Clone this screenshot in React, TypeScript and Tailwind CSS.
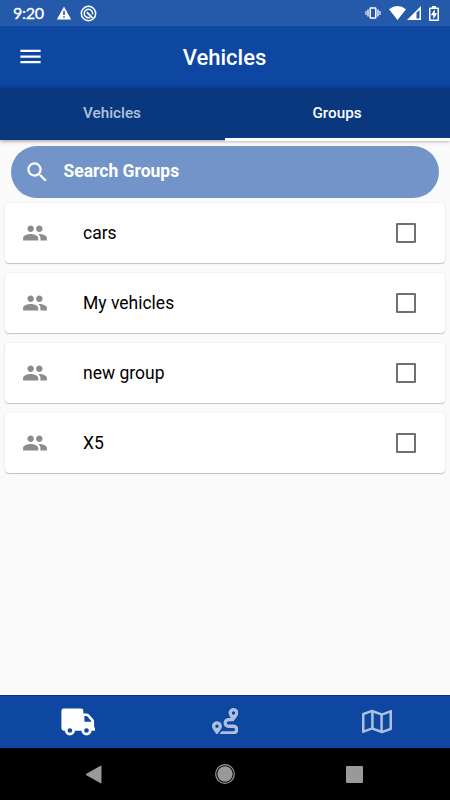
import React from "react";
import { FaRoute, FaRegMap } from "react-icons/fa";
import { MdPeople, MdSearch, MdMenu } from "react-icons/md";

const groups = ["cars", "My vehicles", "new group", "X5"];

function StatusBar() {
  return (
    <div className="flex h-[26px] shrink-0 items-center bg-[#255aab] pl-[13px] pr-[12px] text-white">
      <span className="w-[43px] font-['Lato',sans-serif] text-[16px] leading-[26px] tracking-[-0.3px] [-webkit-text-stroke:0.35px_white]">9:20</span>
      <svg width="16" height="14" viewBox="0 0 16 14">
        <path d="M8 .5 15.2 13.5H.8Z" fill="white" />
        <path d="M7.2 5h1.6v4H7.2zM7.2 10.2h1.6v1.6H7.2z" fill="#1c54aa" />
      </svg>
      <svg className="ml-2" width="17" height="17" viewBox="0 0 17 17" fill="none" stroke="white">
        <circle cx="8.5" cy="8.5" r="7.2" strokeWidth="1.5" />
        <path d="M10.2 12.3A4.2 4.2 0 1 1 12.5 9.4" strokeWidth="1.5" />
        <path d="M6.8 7.2 12.6 12.8" strokeWidth="1.8" />
      </svg>
      <div className="ml-auto flex items-center">
        <svg width="16" height="12" viewBox="0 0 16 12" fill="none" stroke="white">
          <rect x="5.2" y="1" width="5.6" height="10" rx=".6" strokeWidth="1.5" />
          <path d="M3 2.5v7M13 2.5v7" strokeWidth="1.3" />
          <path d="M1 4v4M15 4v4" strokeWidth="1.1" />
        </svg>
        <svg className="ml-[8px]" width="17" height="14" viewBox="0 0 17 14">
          <path d="M0 3.2Q8.5-3.2 17 3.2L8.5 14Z" fill="white" />
        </svg>
        <svg className="ml-[1px]" width="14" height="14" viewBox="0 0 14 14">
          <path d="M14 0v14H0Z" fill="white" />
          <path d="M9.5 6.5 12.5 4v8.5h-3Z" fill="#255aab" />
        </svg>
        <svg className="ml-[8px] mr-[-1px]" width="10" height="15" viewBox="0 0 10 15">
          <path d="M3 0h4v1.5h2q1 0 1 1V14q0 1-1 1H1q-1 0-1-1V2.5q0-1 1-1h2Z" fill="white" />
          <rect x="1.5" y="3" width="7" height="10.5" fill="#255aab" />
          <path d="M5.8 3.2v4h2.4L4.3 13.3V9.2H1.8Z" fill="white" />
        </svg>
      </div>
    </div>
  );
}

function TruckIcon() {
  return (
    <svg className="ml-[5px] mt-px" width="34" height="28" viewBox="0 0 34 28">
      <path
        d="M2.8.6H20q2.4 0 2.4 2.4v2.4h3.4q1.2 0 2 .9l4.5 5q.8.9.8 2.1v6h.4q.8 0 .8.8v1.7q0 .8-.8.8H2.8Q.4 22.7.4 20.3V3Q.4.6 2.8.6Z"
        fill="white"
      />
      <path d="M23.4 8.1h2q.6 0 1 .5l4 4.7q.3.5-.3.5h-6.7Z" fill="#0d47a1" />
      <circle cx="8.9" cy="22.5" r="3.7" fill="#0d47a1" stroke="white" strokeWidth="2.7" />
      <circle cx="25.5" cy="22.5" r="3.7" fill="#0d47a1" stroke="white" strokeWidth="2.7" />
    </svg>
  );
}

function GroupCard({ name }: { name: string }) {
  return (
    <div className="flex h-[60px] items-center rounded-[4px] bg-white pl-[17px] pr-[29px] shadow-[0_1px_1px_rgba(0,0,0,0.2),0_0_2px_rgba(0,0,0,0.1)]">
      <MdPeople size={26} className="text-[#8c8c8c]" />
      <span className="ml-[35px] flex-1 text-[17.5px] leading-6 text-black">{name}</span>
      <span className="h-5 w-5 rounded-[1px] border-2 border-[#707070]" />
    </div>
  );
}

export default function App() {
  return (
    <div className="flex h-[800px] w-[450px] flex-col overflow-hidden bg-[#fafafa] font-['Roboto',sans-serif]">
      <StatusBar />
      <header className="grid h-[61px] shrink-0 grid-cols-[1fr_auto_1fr] items-center bg-[#0d47a1] pl-[17px] pr-[18px] text-white">
        <MdMenu size={27} />
        <h1 className="pt-[2px] text-[22px] font-medium leading-7">Vehicles</h1>
      </header>
      <nav className="z-10 grid h-[53px] shrink-0 grid-cols-2 border-t border-[#0b3f91] bg-[#0a387f] text-center text-[15.25px] font-medium leading-[50px] shadow-[0_1px_4px_rgba(0,0,0,0.4)]">
        <span className="pr-px text-[#b3c2da]">Vehicles</span>
        <span className="border-b-[3px] border-white pr-px text-white">Groups</span>
      </nav>
      <main className="flex flex-1 flex-col">
        <div className="mx-[11px] mt-[5.5px] flex h-[52.5px] items-center rounded-full bg-[#7294c8] pl-[13px] text-white">
          <MdSearch size={26.5} />
          <span className="ml-[13px] pb-[2px] text-[17.5px] font-bold leading-6">Search Groups</span>
        </div>
        <div className="mx-[5px] mt-[5px] flex flex-col gap-[10px]">
          {groups.map((name) => (
            <GroupCard key={name} name={name} />
          ))}
        </div>
      </main>
      <nav className="grid h-[53px] shrink-0 grid-cols-3 items-center justify-items-center border-t border-[#0a2f91] bg-[#0d47a1] pb-[2px] text-[#aec0de]">
        <TruckIcon />
        <FaRoute size={26.5} />
        <FaRegMap className="mr-[-3px] h-[27px] w-[30px]" />
      </nav>
      <footer className="grid h-[52px] shrink-0 grid-cols-3 items-center justify-items-center bg-black">
        <svg className="ml-[37px]" width="17" height="19" viewBox="0 0 17 19">
          <path d="M16 1v17L1 9.5Z" fill="#999" stroke="#999" strokeLinejoin="round" />
        </svg>
        <svg width="20" height="20" viewBox="0 0 20 20">
          <circle cx="10" cy="10" r="9.3" fill="none" stroke="#999" strokeWidth="1.2" />
          <circle cx="10" cy="10" r="7.7" fill="#999" />
        </svg>
        <span className="mr-[41px] h-[17px] w-[17px] rounded-[1px] bg-[#999]" />
      </footer>
    </div>
  );
}
